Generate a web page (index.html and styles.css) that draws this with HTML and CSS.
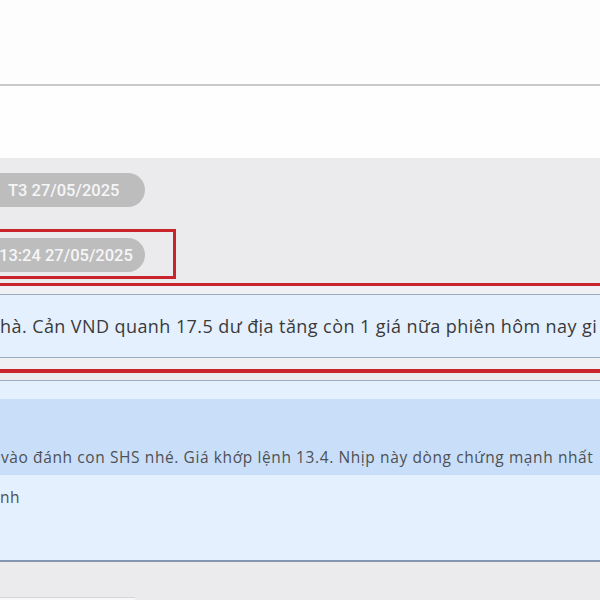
FILE: index.html
```html
<!DOCTYPE html>
<html lang="vi">
<head>
<meta charset="utf-8">
<title>Chat</title>
<link rel="stylesheet" href="styles.css">
</head>
<body>
<div class="page">
  <header class="topbar"></header>
  <div class="subbar"></div>
  <main class="chat">
    <div class="date-row">
      <span class="pill pill-day">T3 27/05/2025</span>
    </div>
    <div class="time-row">
      <div class="mark-box">
        <span class="pill pill-time">13:24 27/05/2025</span>
      </div>
    </div>
    <div class="msg-mark">
      <div class="bubble bubble-one">
        <p class="msg-text">hà. Cản VND quanh 17.5 dư địa tăng còn 1 giá nữa phiên hôm nay gi</p>
      </div>
    </div>
    <div class="bubble bubble-two">
      <div class="bubble-top"></div>
      <div class="highlight">
        <p class="msg-text small">vào đánh con SHS nhé. Giá khớp lệnh 13.4. Nhịp này dòng chứng mạnh nhất</p>
      </div>
      <div class="bubble-rest">
        <p class="msg-text small">nh</p>
      </div>
    </div>
    <div class="next-row"><span class="next-pill"></span></div>
  </main>
</div>
</body>
</html>
```
FILE: styles.css
```css
* { box-sizing: border-box; }
html, body { margin: 0; padding: 0; }
body {
  width: 600px;
  height: 600px;
  overflow: hidden;
  background: #ffffff;
  font-family: "Open Sans", "Noto Sans", sans-serif;
}
.page {
  width: 600px;
  height: 600px;
  overflow: hidden;
  display: flex;
  flex-direction: column;
}
.topbar {
  height: 86px;
  flex: none;
  background: #fdfdfd;
  border-bottom: 2px solid #c9c9cb;
  box-shadow: 0 2px 6px rgba(0, 0, 0, 0.07);
}
.subbar {
  height: 73px;
  flex: none;
  background: #fefefe;
  border-bottom: 1px solid #e9e9ec;
}
.chat {
  flex: 1;
  background: #ebebee;
  padding-top: 14px;
  display: flex;
  flex-direction: column;
  overflow: hidden;
}
.date-row, .time-row {
  display: flex;
}
.pill {
  display: inline-flex;
  align-items: center;
  height: 34px;
  background: #bdbdbe;
  color: #f6f6f6;
  font-family: Roboto, "Open Sans", sans-serif;
  font-weight: 500;
  font-size: 16.5px;
  border-radius: 0 17px 17px 0;
  white-space: nowrap;
}
.pill-day {
  padding: 0 26px 0 8px;
}
.pill-time {
  margin-left: -4px;
  padding: 0 12px 0 0;
}
.time-row {
  margin-top: 22px;
}
.mark-box {
  margin-left: -10px;
  border: 3px solid #c9232c;
  padding: 6px 28px 4px 10px;
  display: flex;
}
.msg-mark {
  margin: 4px -10px 0;
  border-top: 3px solid #c9232c;
  border-bottom: 4px solid #c9232c;
  background: #eef0f4;
  padding: 8px 10px 11px;
}
.bubble {
  background: #e4f0fd;
  border-top: 1px solid #9aabc2;
  border-bottom: 1px solid #9aabc2;
}
.bubble-one {
  height: 64px;
  margin: 0 -10px;
  display: flex;
  align-items: center;
  padding-left: 10px;
}
.msg-text {
  margin: 0;
  white-space: nowrap;
  color: #3a3a3c;
  font-size: 18px;
  letter-spacing: 0.42px;
  line-height: 24px;
}
.msg-text.small {
  font-size: 15.5px;
  letter-spacing: 0.6px;
  color: #4e5054;
  line-height: 20px;
}
.bubble-two {
  margin-top: 7px;
  border-bottom: 2px solid #8497b0;
  flex: none;
}
.bubble-top {
  height: 18px;
}
.highlight {
  background: #c9dff9;
  height: 76px;
  display: flex;
  align-items: flex-end;
  padding: 0 0 8px 1px;
}
.bubble-rest {
  height: 85px;
  padding: 12px 0 0 0;
}
.next-row {
  flex: 1;
  display: flex;
  align-items: flex-end;
}
.next-pill {
  width: 135px;
  height: 3px;
  background: #f7f7f8;
  border-top: 1px solid #d6d6d8;
}
```
